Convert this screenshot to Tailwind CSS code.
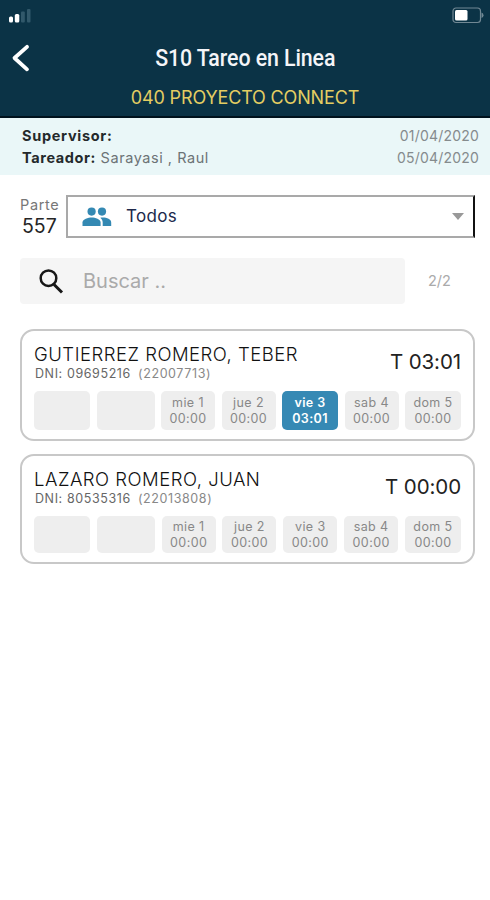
<!DOCTYPE html>
<html lang="es">
<head>
<meta charset="utf-8">
<title>S10 Tareo en Linea</title>
<script src="https://cdn.jsdelivr.net/npm/@tailwindcss/browser@4"></script>
</head>
<body class="bg-white font-['Inter',sans-serif] w-[490px] h-[900px] overflow-hidden whitespace-nowrap">
<header class="h-[118px] bg-[#0b3346] border-b-2 border-[#00121d] flex flex-col">
  <div class="flex justify-between h-[34px] pl-2 pr-[6px] pt-[7px]">
    <svg class="w-6 h-4 mt-[1px]" viewBox="0 0 24 16"><rect x="1" y="8.5" width="4" height="6" rx="1.5" fill="#fff"/><rect x="6.8" y="6" width="4.5" height="8.5" rx="1.5" fill="#fff"/><rect x="13" y="3.5" width="3.8" height="11" rx="1" fill="#31586a"/><rect x="19" y="1" width="3.5" height="13.5" rx="1" fill="#31586a"/></svg>
    <svg class="w-8 h-[18px]" viewBox="0 0 32 18"><rect x="1" y="1" width="27.5" height="14.5" rx="3" fill="none" stroke="#718894" stroke-width="1.2"/><path d="M29.5 5.5q2 .5 2 2.8t-2 2.8z" fill="#718894"/><rect x="3" y="3" width="12.5" height="10.5" rx="1.5" fill="#fff"/></svg>
  </div>
  <div class="flex items-center h-[47px]">
    <svg class="w-8 h-8 ml-[5px]" viewBox="0 0 32 32"><path d="M22 4.8L9.5 16L22 27.3" fill="none" stroke="#fff" stroke-width="3.8" stroke-linecap="round" stroke-linejoin="round"/></svg>
    <h1 class="flex-1 text-center pr-[37px] text-[24px] font-medium tracking-[-0.1px] text-[#f5f5f8] font-['Roboto',sans-serif]"><span class="inline-block scale-x-[0.89] -mx-4">S10 Tareo en Linea</span></h1>
  </div>
  <p class="text-center text-[18px] leading-[34px] tracking-[-0.15px] text-[#e3cd62]">040 PROYECTO CONNECT</p>
</header>
<section class="h-[57px] bg-[#eaf7f8] pt-[7px] pl-[22px] pr-[11px] flex justify-between text-[14.5px] leading-[22px] text-[#6c7376]">
  <div><p class="font-bold text-[#24292b] tracking-[0.7px]">Supervisor:</p><p class="tracking-[0.55px]"><span class="font-bold text-[#24292b] tracking-[0.6px]">Tareador:</span> Sarayasi , Raul</p></div>
  <div class="text-right text-[14px] text-[#858b8d] tracking-[0.2px] leading-[21.5px]"><p>01/04/2020</p><p>05/04/2020</p></div>
</section>
<main class="px-5 pt-5 pr-[15px]">
  <div class="flex h-[43px]">
    <div class="w-[46px] text-[#777]"><p class="text-[14.5px] leading-[19px] tracking-[0.65px]">Parte</p><p class="text-[19.5px] leading-[24px] text-[#252525] pl-[2px]">557</p></div>
    <div class="flex-1 flex items-center border-2 border-[#a9a9a9] border-r-[#111] pl-[14px] pr-[9px]">
      <svg class="w-[30px] h-[20px]" viewBox="0 0 30 20" fill="#3489b3"><circle cx="9.6" cy="4.6" r="4.1"/><circle cx="20" cy="4.6" r="4.1"/><path d="M.5 19v-3.5c0-3.5 5.7-5 9.2-5s8.9 1.5 8.9 5V19z"/><path d="M18.3 10.8c5-.8 10.9 1 10.9 4.7V19h-8.5v-3.5c0-2-1-3.6-2.4-4.7z"/></svg>
      <span class="ml-[14px] mt-[1px] text-[17px] tracking-[0.3px] text-[#20294b]">Todos</span>
      <svg class="w-3 h-[7px] ml-auto" viewBox="0 0 12 7"><path d="M0 0h12L6 7z" fill="#999"/></svg>
    </div>
  </div>
  <div class="flex items-center mt-5 h-[46px]">
    <div class="w-[385px] h-[46px] bg-[#f5f5f5] rounded-sm flex items-center pl-[18px]">
      <svg class="w-[27px] h-[27px]" viewBox="0 0 27 27" fill="none" stroke="#171717"><circle cx="10.5" cy="10.2" r="7.8" stroke-width="2.5"/><path d="M16 16.5l8 8" stroke-width="3"/></svg>
      <span class="ml-[18px] text-[20px] text-[#aaa]">Buscar ..</span>
    </div>
    <span class="ml-[23px] text-[14.5px] text-[#aaa]">2/2</span>
  </div>
  <article class="mt-[25px] h-[112px] border-2 border-[#c8c8c8] rounded-[14px] px-3 pt-[11px]">
    <div class="flex justify-between h-[49px]">
      <div><h2 class="text-[18.5px] leading-[24px] font-light tracking-[0.5px] text-[#111]">GUTIERREZ ROMERO, TEBER</h2><p class="text-[12.5px] leading-[15px] tracking-[0.6px] text-[#666] pl-[1px]">DNI: 09695216 <span class="ml-[3px] text-[#888]">(22007713)</span></p></div>
      <p class="text-[20.5px] leading-[39px] text-[#222] tracking-[-0.1px]">T 03:01</p>
    </div>
    <div class="grid grid-cols-[56px_58px_54px_54px_56px_54px_56px] justify-between h-[39px] text-[12.5px] leading-[16px] tracking-[0.4px] text-[#888] text-center *:bg-[#eee] *:rounded-[5px] *:pt-[4px]">
      <div></div><div></div><div>mie 1<br>00:00</div><div>jue 2<br>00:00</div><div class="bg-[#3689b4]! text-white font-semibold">vie 3<br>03:01</div><div>sab 4<br>00:00</div><div>dom 5<br>00:00</div>
    </div>
  </article>
  <article class="mt-[13px] h-[110px] border-2 border-[#c8c8c8] rounded-[14px] px-3 pt-[11px]">
    <div class="flex justify-between h-[49px]">
      <div><h2 class="text-[18.5px] leading-[24px] font-light tracking-[0.5px] text-[#111]">LAZARO ROMERO, JUAN</h2><p class="text-[12.5px] leading-[15px] tracking-[0.6px] text-[#666] pl-[1px]">DNI: 80535316 <span class="ml-[3px] text-[#888]">(22013808)</span></p></div>
      <p class="text-[20.5px] leading-[39px] text-[#222] tracking-[-0.1px]">T 00:00</p>
    </div>
    <div class="grid grid-cols-[56px_58px_54px_54px_54px_54px_56px] justify-between h-[37px] text-[12.5px] leading-[16px] tracking-[0.4px] text-[#888] text-center *:bg-[#eee] *:rounded-[5px] *:pt-[3px]">
      <div></div><div></div><div>mie 1<br>00:00</div><div>jue 2<br>00:00</div><div>vie 3<br>00:00</div><div>sab 4<br>00:00</div><div>dom 5<br>00:00</div>
    </div>
  </article>
</main>
</body>
</html>
